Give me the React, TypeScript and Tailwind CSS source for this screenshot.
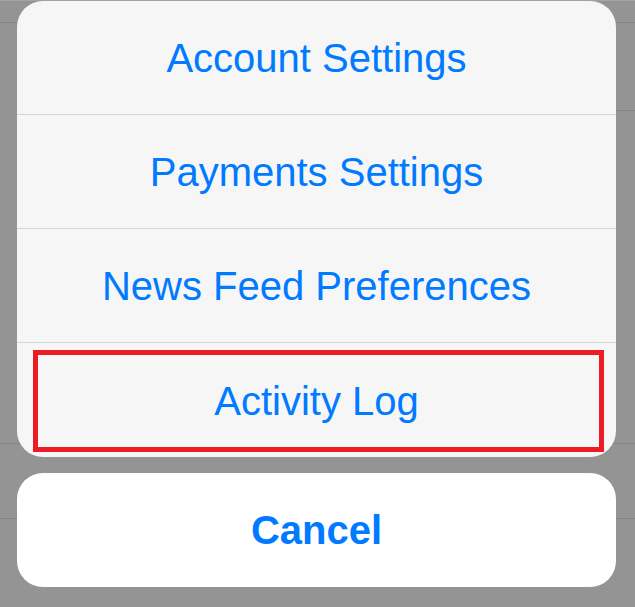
import React from "react";

const font = { fontFamily: '"Liberation Sans", Arial, sans-serif' };

function BgRow({ h, leftLine = true, rightLine = true }: { h: string; leftLine?: boolean; rightLine?: boolean }) {
  return (
    <div className={`flex ${h}`}>
      <div className={`w-[20px] ${leftLine ? "border-b border-[#858585]" : ""}`} />
      <div className="flex-1" />
      <div className={`w-[24px] ${rightLine ? "border-b border-[#858585]" : ""}`} />
    </div>
  );
}

export default function App() {
  const items = ["Account Settings", "Payments Settings", "News Feed Preferences"];
  return (
    <div className="relative w-[635px] h-[607px] bg-[#949494] overflow-hidden" style={font}>
      {/* underlying list lines */}
      <div className="flex flex-col">
        <div className="h-[1px] bg-[#a3a3a3]" />
        <BgRow h="h-[22px]" />
        <BgRow h="h-[88px]" leftLine={false} />
        <BgRow h="h-[246px]" leftLine={false} rightLine={false} />
        <BgRow h="h-[87px]" />
        <BgRow h="h-[75px]" />
      </div>

      {/* action sheet overlay */}
      <div className="absolute inset-0 flex flex-col pl-[17px] pr-[19px] pt-[1px]">
        <div className="flex flex-col rounded-[26px] bg-[#f6f6f6] overflow-hidden">
          {items.map((t) => (
            <div
              key={t}
              className="h-[114px] flex items-center justify-center border-b border-[#d4d4d8] text-[40px] text-[#007aff]"
            >
              {t}
            </div>
          ))}
          <div className="h-[114px] flex pl-[16px] pr-[12px] pt-[7px] pb-[5px]">
            <div className="flex-1 flex items-center justify-center pr-[4px] border-[5px] border-[#ec1c24] text-[40px] text-[#007aff]">
              Activity Log
            </div>
          </div>
        </div>
        <div className="mt-[16px] h-[114px] rounded-[26px] bg-white flex items-center justify-center text-[40px] font-bold text-[#007aff]">
          Cancel
        </div>
      </div>
    </div>
  );
}
